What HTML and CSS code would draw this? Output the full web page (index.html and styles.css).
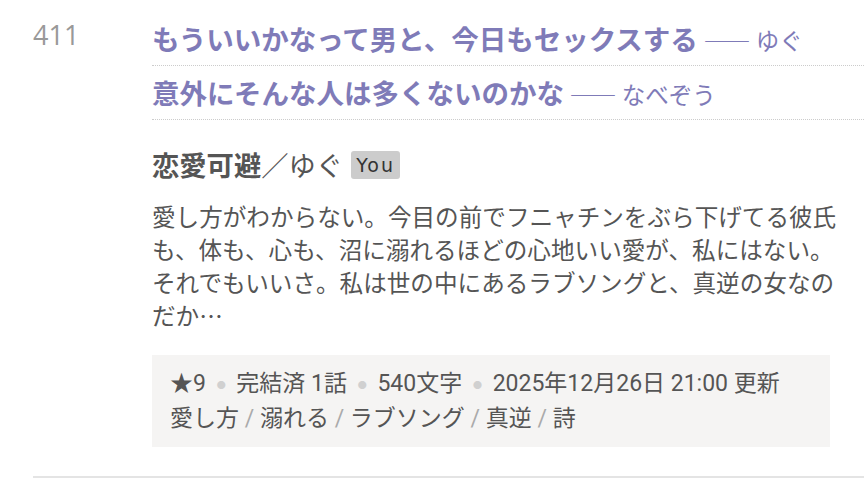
FILE: index.html
```html
<!DOCTYPE html>
<html lang="ja">

<head>
    <meta charset="UTF-8">
    <meta name="viewport" content="width=device-width, initial-scale=1.0">
    <title>恋愛可避</title>
    <link rel="stylesheet" href="styles.css">
</head>

<body>
    <div class="entry">
        <div class="rank">411</div>
        <div class="main">
            <div class="quotes">
                <div class="quote">
                    <span class="line">もういいかなって男と、今日もセックスする</span>
                    <span class="by">―― ゆぐ</span>
                </div>
                <div class="quote">
                    <span class="line">意外にそんな人は多くないのかな</span>
                    <span class="by">―― なべぞう</span>
                </div>
            </div>

            <h2 class="title">恋愛可避<span class="author">／ゆぐ</span> <span class="badge">You</span></h2>
            <p class="desc">愛し方がわからない。今目の前でフニャチンをぶら下げてる彼氏も、体も、心も、沼に溺れるほどの心地いい愛が、私にはない。それでもいいさ。私は世の中にあるラブソングと、真逆の女なのだか…</p>

            <div class="meta">
                <div>★9 <span class="dot">●</span> 完結済 1話 <span class="dot">●</span> 540文字 <span class="dot">●</span> 2025年12月26日 21:00 更新</div>
                <div>愛し方 <span class="sep">/</span> 溺れる <span class="sep">/</span> ラブソング <span class="sep">/</span> 真逆 <span class="sep">/</span> 詩</div>
            </div>
        </div>
    </div>
</body>

</html>
```

FILE: styles.css
```css
body {
    margin: 0;
    font-family: Roboto, "Noto Sans CJK JP", sans-serif;
    color: #555;
    background: #fff;
}

.entry {
    display: flex;
    margin-left: 33px;
    padding-top: 12px;
    padding-bottom: 29px;
    border-bottom: 2px solid #e4e4e4;
}

.rank {
    width: 119px;
    flex-shrink: 0;
    font-family: "Open Sans", sans-serif;
    font-size: 27px;
    line-height: 46px;
    color: #999;
}

.main {
    flex: 1;
}

.quote {
    height: 40px;
    padding: 6px 0 7px;
    border-bottom: 1px dotted #ccc;
    font-family: "Noto Sans CJK JP", sans-serif;
    line-height: 40px;
    color: #7f7bb8;
    white-space: nowrap;
}

.quote .line {
    font-size: 27.5px;
    font-weight: bold;
}

.quote .by {
    font-size: 23.5px;
    margin-left: 2px;
}

.title {
    margin: 24px 0 0;
    font-family: "Noto Sans CJK JP", sans-serif;
    font-size: 27.3px;
    line-height: 40px;
    color: #555;
}

.author {
    font-weight: normal;
}

.badge {
    display: inline-block;
    vertical-align: 4px;
    margin-left: 2px;
    padding: 0 5px;
    font-family: "DejaVu Sans", sans-serif;
    font-weight: normal;
    font-size: 19px;
    line-height: 28px;
    letter-spacing: 2px;
    color: #333;
    background: #ccc;
    border-radius: 3px;
}

.desc {
    margin: 16px 16px 0 0;
    font-family: "Noto Sans CJK JP", sans-serif;
    font-size: 23.6px;
    line-height: 33px;
}

.meta {
    margin: 23px 34px 0 0;
    padding: 12px 18px;
    font-size: 23px;
    line-height: 33px;
    background: #f5f4f3;
}

.dot {
    display: inline-block;
    vertical-align: 3px;
    margin: 0 5px;
    color: #d0d0d0;
    font-size: 9px;
}

.sep {
    color: #aaa;
}
```
